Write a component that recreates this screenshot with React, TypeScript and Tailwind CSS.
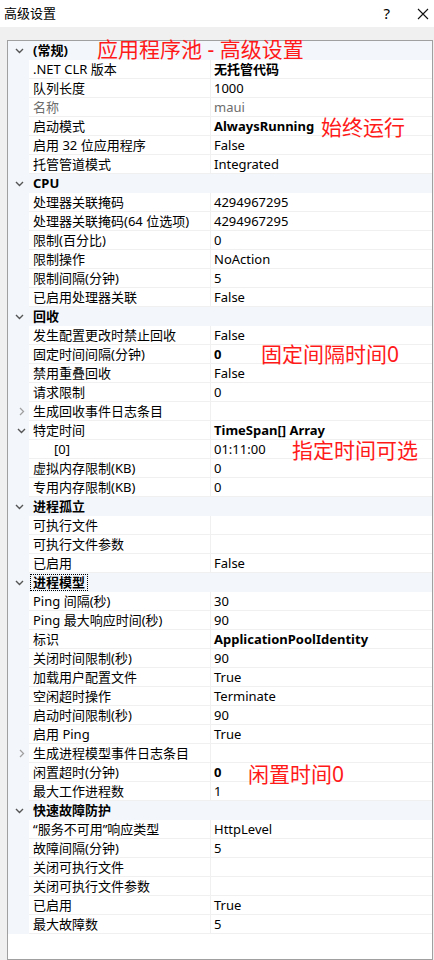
import React from "react";

type Row = {
  kind: "cat" | "prop";
  name: string;
  value?: string;
  bold?: boolean;
  muted?: boolean;
  toggle?: "open" | "closed";
  indent?: boolean;
  focus?: boolean;
};

const rows: Row[] = [
  { kind: "cat", name: "(常规)" },
  { kind: "prop", name: ".NET CLR 版本", value: "无托管代码", bold: true },
  { kind: "prop", name: "队列长度", value: "1000" },
  { kind: "prop", name: "名称", value: "maui", muted: true },
  { kind: "prop", name: "启动模式", value: "AlwaysRunning", bold: true },
  { kind: "prop", name: "启用 32 位应用程序", value: "False" },
  { kind: "prop", name: "托管管道模式", value: "Integrated" },
  { kind: "cat", name: "CPU" },
  { kind: "prop", name: "处理器关联掩码", value: "4294967295" },
  { kind: "prop", name: "处理器关联掩码(64 位选项)", value: "4294967295" },
  { kind: "prop", name: "限制(百分比)", value: "0" },
  { kind: "prop", name: "限制操作", value: "NoAction" },
  { kind: "prop", name: "限制间隔(分钟)", value: "5" },
  { kind: "prop", name: "已启用处理器关联", value: "False" },
  { kind: "cat", name: "回收" },
  { kind: "prop", name: "发生配置更改时禁止回收", value: "False" },
  { kind: "prop", name: "固定时间间隔(分钟)", value: "0", bold: true },
  { kind: "prop", name: "禁用重叠回收", value: "False" },
  { kind: "prop", name: "请求限制", value: "0" },
  { kind: "prop", name: "生成回收事件日志条目", value: "", toggle: "closed" },
  { kind: "prop", name: "特定时间", value: "TimeSpan[] Array", bold: true, toggle: "open" },
  { kind: "prop", name: "[0]", value: "01:11:00", indent: true },
  { kind: "prop", name: "虚拟内存限制(KB)", value: "0" },
  { kind: "prop", name: "专用内存限制(KB)", value: "0" },
  { kind: "cat", name: "进程孤立" },
  { kind: "prop", name: "可执行文件", value: "" },
  { kind: "prop", name: "可执行文件参数", value: "" },
  { kind: "prop", name: "已启用", value: "False" },
  { kind: "cat", name: "进程模型", focus: true },
  { kind: "prop", name: "Ping 间隔(秒)", value: "30" },
  { kind: "prop", name: "Ping 最大响应时间(秒)", value: "90" },
  { kind: "prop", name: "标识", value: "ApplicationPoolIdentity", bold: true },
  { kind: "prop", name: "关闭时间限制(秒)", value: "90" },
  { kind: "prop", name: "加载用户配置文件", value: "True" },
  { kind: "prop", name: "空闲超时操作", value: "Terminate" },
  { kind: "prop", name: "启动时间限制(秒)", value: "90" },
  { kind: "prop", name: "启用 Ping", value: "True" },
  { kind: "prop", name: "生成进程模型事件日志条目", value: "", toggle: "closed" },
  { kind: "prop", name: "闲置超时(分钟)", value: "0", bold: true },
  { kind: "prop", name: "最大工作进程数", value: "1" },
  { kind: "cat", name: "快速故障防护" },
  { kind: "prop", name: "“服务不可用”响应类型", value: "HttpLevel" },
  { kind: "prop", name: "故障间隔(分钟)", value: "5" },
  { kind: "prop", name: "关闭可执行文件", value: "" },
  { kind: "prop", name: "关闭可执行文件参数", value: "" },
  { kind: "prop", name: "已启用", value: "True" },
  { kind: "prop", name: "最大故障数", value: "5" },
];

const ChevronDown = () => (
  <svg width="9" height="6" viewBox="0 0 9 6" className="block">
    <path d="M1 1 L4.5 4.5 L8 1" fill="none" stroke="#555" strokeWidth="1.4" />
  </svg>
);

const ChevronRight = () => (
  <svg width="6" height="9" viewBox="0 0 6 9" className="block">
    <path d="M1 1 L4.5 4.5 L1 8" fill="none" stroke="#a0a0a0" strokeWidth="1.3" />
  </svg>
);

const GridRow = ({ row }: { row: Row }) => {
  if (row.kind === "cat") {
    return (
      <div className="flex h-[19px] bg-[#f3f7fc] items-center">
        <div className="w-[21px] flex justify-center pl-[2px]">
          <ChevronDown />
        </div>
        <span
          className={
            "font-bold text-[13px] leading-[15px] px-[2px] ml-[2px] " +
            (row.focus ? "outline outline-1 outline-dotted outline-black" : "")
          }
        >
          {row.name}
        </span>
      </div>
    );
  }
  return (
    <div className="flex h-[19px]">
      <div className="w-[21px] bg-[#f3f7fc] flex items-center justify-center pl-[6px]">
        {row.toggle === "open" && <ChevronDown />}
        {row.toggle === "closed" && <ChevronRight />}
      </div>
      <div
        className={
          "w-[182px] border-b border-r border-[#f0f0f0] flex items-center text-[13px] leading-[15px] whitespace-nowrap overflow-hidden " +
          (row.indent ? "pl-[25px] " : "pl-[4px] ") +
          (row.muted ? "text-[#6d6d6d]" : "text-black")
        }
      >
        {row.name}
      </div>
      <div
        className={
          "flex-1 border-b border-[#f0f0f0] flex items-center pl-[3px] text-[13px] leading-[15px] whitespace-nowrap " +
          (row.bold ? "font-bold " : "") +
          (row.muted ? "text-[#6d6d6d]" : "text-black")
        }
      >
        {row.value}
      </div>
    </div>
  );
};

export default function App() {
  return (
    <div
      className="relative w-[434px] h-[960px] overflow-hidden bg-[#f0f0f0]"
      style={{ fontFamily: '"Noto Sans", "Noto Sans CJK SC", sans-serif' }}
    >
      <div className="h-[27px] bg-white flex items-center justify-between pl-[4px] pr-[4px]">
        <span className="text-[13px] text-black">高级设置</span>
        <div className="flex items-center gap-[27px]">
          <span className="text-[15px] text-black">?</span>
          <svg width="12" height="12" viewBox="0 0 12 12" className="mr-[1px]">
            <path d="M1 1 L11 11 M11 1 L1 11" stroke="#111" strokeWidth="1.1" />
          </svg>
        </div>
      </div>

      <div className="ml-[7px] mt-[13px] w-[426px] h-[920px] border border-[#a0a0a0] bg-white">
        {rows.map((r, i) => (
          <GridRow key={i} row={r} />
        ))}
      </div>

      <div className="absolute left-[97px] top-[35px] text-[21px] leading-[28px] text-[#ff1a1a]">
        应用程序池 - 高级设置
      </div>
      <div className="absolute left-[321px] top-[113px] text-[21px] leading-[28px] text-[#ff1a1a]">
        始终运行
      </div>
      <div className="absolute left-[261px] top-[340px] text-[21px] leading-[28px] text-[#ff1a1a]">
        固定间隔时间0
      </div>
      <div className="absolute left-[292px] top-[436px] text-[21px] leading-[28px] text-[#ff1a1a]">
        指定时间可选
      </div>
      <div className="absolute left-[248px] top-[760px] text-[21px] leading-[28px] text-[#ff1a1a]">
        闲置时间0
      </div>
    </div>
  );
}
